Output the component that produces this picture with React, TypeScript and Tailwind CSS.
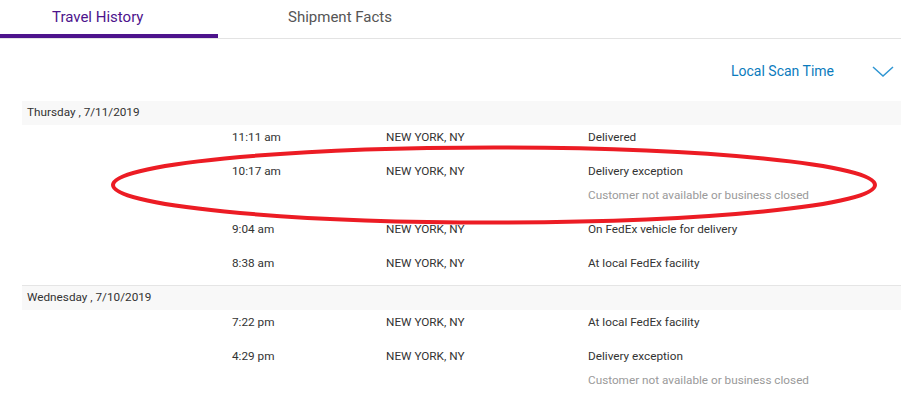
import React from "react";

type Row = { time: string; city: string; status: string; sub?: string };
type Group = { date: string; rows: Row[] };

const groups: Group[] = [
  {
    date: "Thursday , 7/11/2019",
    rows: [
      { time: "11:11 am", city: "NEW YORK, NY", status: "Delivered" },
      { time: "10:17 am", city: "NEW YORK, NY", status: "Delivery exception", sub: "Customer not available or business closed" },
      { time: "9:04 am", city: "NEW YORK, NY", status: "On FedEx vehicle for delivery" },
      { time: "8:38 am", city: "NEW YORK, NY", status: "At local FedEx facility" },
    ],
  },
  {
    date: "Wednesday , 7/10/2019",
    rows: [
      { time: "7:22 pm", city: "NEW YORK, NY", status: "At local FedEx facility" },
      { time: "4:29 pm", city: "NEW YORK, NY", status: "Delivery exception", sub: "Customer not available or business closed" },
    ],
  },
];

export default function App() {
  return (
    <div className="relative w-[901px] h-[401px] overflow-hidden bg-white font-['Roboto',_'Liberation_Sans',_sans-serif]">
      <div className="flex h-[39px] border-b border-[#e3e3e3]">
        <div className="w-[218px] flex flex-col">
          <div className="flex-1 flex items-center pl-[52px] pt-[1px] text-[15px] text-[#4d148c]">Travel History</div>
          <div className="h-[4px] bg-[#4d148c]" />
        </div>
        <div className="flex items-center pl-[70px] pb-[3px] text-[15px] text-[#555]">Shipment Facts</div>
      </div>
      <div className="flex items-center justify-end h-[62px] pt-[3px] pr-[7px]">
        <span className="text-[14px] text-[#0b7bbd]">Local Scan Time</span>
        <svg className="ml-[38px]" width="22" height="11" viewBox="0 0 22 11">
          <path d="M1 1 L11 10 L21 1" fill="none" stroke="#2f96d3" strokeWidth="1.5" />
        </svg>
      </div>
      <div className="ml-[22px]">
        {groups.map((g, gi) => (
          <div key={gi} className={gi > 0 ? "border-t border-[#e5e5e5]" : ""}>
            <div className="h-[24px] flex items-center pl-[5px] bg-[#f8f8f8] text-[11.75px] text-[#333]">{g.date}</div>
            {g.rows.map((r, ri) => (
              <div key={ri} className="flex pt-[5px] pb-[15px] text-[11.75px] leading-[14px] text-[#333]">
                <div className="w-[210px]" />
                <div className="w-[154px]">{r.time}</div>
                <div className="w-[202px]">{r.city}</div>
                <div className="flex flex-col gap-[10px]">
                  <div>{r.status}</div>
                  {r.sub && <div className="text-[#9a9a9a]">{r.sub}</div>}
                </div>
              </div>
            ))}
          </div>
        ))}
      </div>
      <svg className="absolute left-0 top-0 pointer-events-none" width="901" height="401" viewBox="0 0 901 401">
        <ellipse cx="494" cy="185" rx="381" ry="37.5" fill="none" stroke="#ec1c24" strokeWidth="4" />
      </svg>
    </div>
  );
}
